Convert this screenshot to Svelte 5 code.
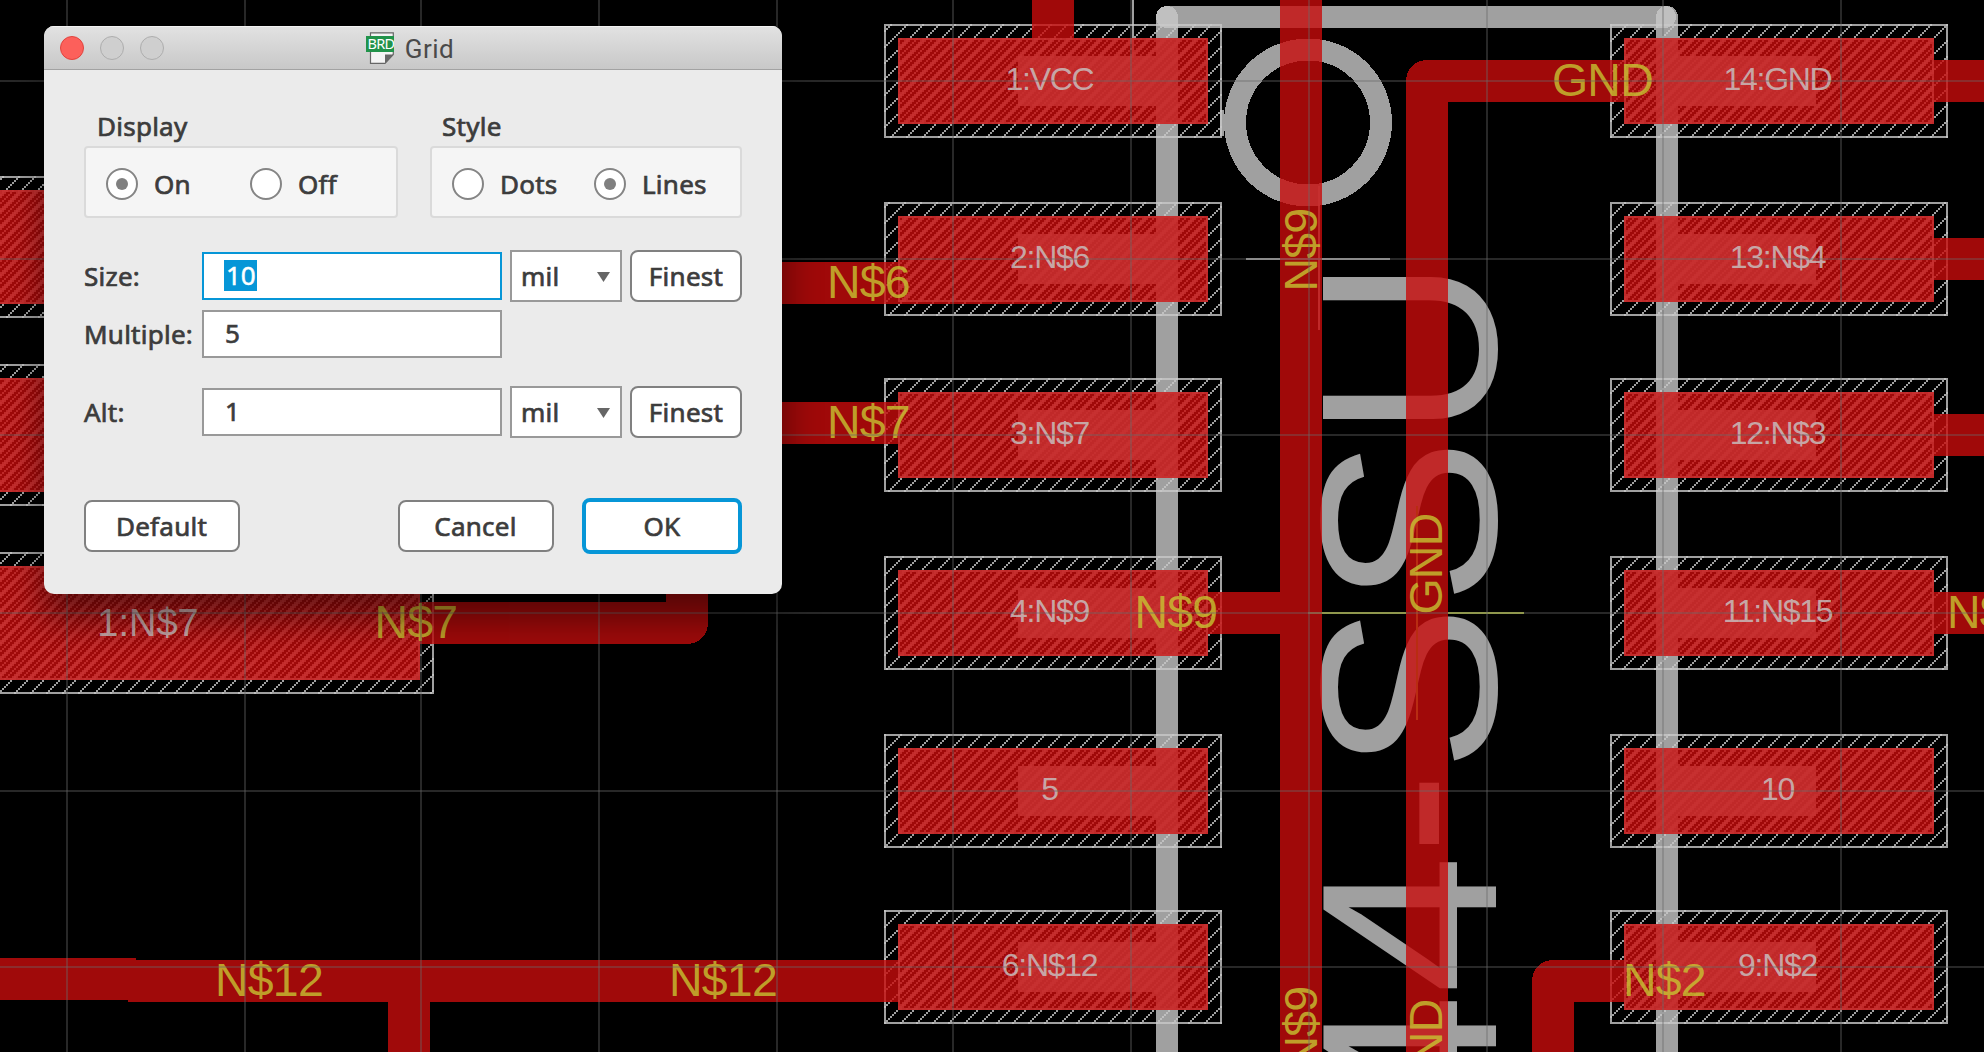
<script>
  const gridX = [66, 244, 420, 598, 776, 952, 1130, 1308, 1486, 1662, 1840];
  const gridY = [80, 258, 434, 612, 790, 966];
  const rows = [24, 202, 378, 556, 734, 910];
  const leftNames = ['1:VCC', '2:N$6', '3:N$7', '4:N$9', '5', '6:N$12'];
  const rightNames = ['14:GND', '13:N$4', '12:N$3', '11:N$15', '10', '9:N$2'];

  const pads = [
    ...rows.map((y, i) => ({ x: 884, y, w: 338, h: 114, name: leftNames[i], tx: 1049.5, box: 1018 })),
    ...rows.map((y, i) => ({ x: 1610, y, w: 338, h: 114, name: rightNames[i], tx: 1777.5, box: 1678 })),
    { x: -60, y: 176, w: 494, h: 142 },
    { x: -60, y: 364, w: 494, h: 142 },
    { x: -60, y: 552, w: 494, h: 142 }
  ];

  // Diagonal hatches are built from 2px cells in an 8 x 8 tile.
  const cells = (keep) => {
    const out = [];
    for (let i = 0; i < 8; i++)
      for (let j = 0; j < 8; j++) if (keep.includes((i + j) % 8)) out.push([i * 2, j * 2]);
    return out;
  };
  const wide = cells([1]);
  const dense = cells([0, 1, 2, 5]);

  const traces = [
    'M1032 0H1074V60H1032Z',
    'M700 262H1052V304H700Z',
    'M700 402H1000V444H700Z',
    'M300 602H666V560H708V623A21 21 0 0 1 687 644H300Z',
    'M0 958H136V960H920V1002H430V1052H388V1002H128V1000H0Z',
    'M1280 0H1322V1052H1280V634H1180V592H1280Z',
    'M1448 1052H1406V81A21 21 0 0 1 1427 60H1640V102H1448Z',
    'M1920 60H1984V102H1920Z',
    'M1920 238H1984V280H1920Z',
    'M1920 414H1984V456H1920Z',
    'M1920 592H1984V634H1920Z',
    'M1532 1052V981A21 21 0 0 1 1553 960H1640V1002H1574V1052Z'
  ];

  const nets = [
    ['N$6', 827, 298], ['N$7', 827, 438], ['N$7', 374.5, 638], ['N$12', 215, 996],
    ['N$12', 669, 996], ['N$9', 1134.5, 628], ['GND', 1552, 96], ['N$2', 1623, 996], ['N$15', 1947, 628]
  ];
  const upright = [
    ['N$9', 1317, 291.5], ['N$9', 1317, 1069.5], ['GND', 1442, 614.5], ['GND', 1442, 1100.5]
  ];

  let display = $state('On');
  let lineStyle = $state('Lines');
</script>

<main class="stage">
  <svg class="board" width="1984" height="1052" viewBox="0 0 1984 1052">
    <defs>
      <pattern id="wide" width="16" height="16" patternUnits="userSpaceOnUse">
        {#each wide as [x, y]}<rect {x} {y} width="2" height="2" class="layer" />{/each}
      </pattern>
      <pattern id="dense" width="16" height="16" patternUnits="userSpaceOnUse">
        {#each dense as [x, y]}<rect {x} {y} width="2" height="2" class="layer" />{/each}
      </pattern>
    </defs>

    <!-- silkscreen -->
    <g class="silk">
      <path d="M1167 1060V17M1667 1060V17" />
      <path d="M1167 17H1665" />
      <circle cx="1308" cy="122.5" r="73" />
      <rect x="1220" y="110" width="4" height="26" class="layer" />
      <rect x="1132" y="0" width="2" height="56" class="layer" />
      <rect x="1246" y="258" width="144" height="2" class="layer" />
      <rect x="1318" y="186" width="2" height="144" class="layer" />
      {#each pads as p}
        {#if p.name}<rect x={p.box} y={p.y + 32} width="138" height="50" class="layer" />{/if}
      {/each}
    </g>
    <text class="value" transform="translate(1496 1133) rotate(-90)">44-SSU</text>

    <!-- stop mask and pad hatching -->
    {#each pads as p}
      <rect x={p.x} y={p.y} width={p.w} height={p.h} fill="url(#wide)" />
      <rect x={p.x + 1} y={p.y + 1} width={p.w - 2} height={p.h - 2} class="outline" />
      <rect x={p.x + 14} y={p.y + 14} width={p.w - 28} height={p.h - 28} fill="url(#dense)" />
      <rect x={p.x + 15} y={p.y + 15} width={p.w - 30} height={p.h - 30} class="outline" />
    {/each}

    <!-- copper -->
    <g class="copper">
      {#each traces as d}<path {d} />{/each}
      {#each pads as p}
        <rect x={p.x + 14} y={p.y + 14} width={p.w - 28} height={p.h - 28} />
      {/each}
    </g>

    <rect x="1322" y="612" width="202" height="2" fill="#a6b43c" />
    <rect x="1406" y="612" width="42" height="2" fill="#a00a0a" />
    <rect x="1308" y="612" width="14" height="2" fill="#a8502c" />
    <rect x="1416" y="506" width="2" height="214" fill="#b92c12" />

    {#each pads as p}
      {#if p.name}<text class="pad" x={p.tx} y={p.y + 66}>{p.name}</text>{/if}
    {/each}
    <text class="pad big" x="148" y="636">1:N$7</text>
    {#each nets as [t, x, y]}<text class="net" {x} {y}>{t}</text>{/each}
    {#each upright as [t, x, y]}
      <text class="net" transform="translate({x} {y}) rotate(-90)">{t}</text>
    {/each}

    <g class="grid">
      {#each gridX as x}<rect {x} y="0" width="2" height="1052" />{/each}
      {#each gridY as y}<rect x="0" {y} width="1984" height="2" />{/each}
    </g>
  </svg>

  <section class="dialog">
    <header>
      <div class="lights"><i class="close"></i><i></i><i></i></div>
      <div class="title">
        <svg width="28" height="32" viewBox="0 0 28 32">
          <path d="M4.5 .8H27.3V22.5L19 31.3H4.5Z" fill="#f4f4f4" stroke="#666" stroke-width="1.2" />
          <path d="M19 31.3V22.6H27.3Z" fill="#666" />
          <rect y="4" width="28" height="16" fill="#21934a" />
          <text x="1.5" y="17.2" class="brd">BRD</text>
        </svg>
        <span>Grid</span>
      </div>
    </header>

    <div class="body">
      <div class="groups">
        <div class="group display">
          <h2>Display</h2>
          <div class="options">
            {#each ['On', 'Off'] as o}
              <button class="radio" onclick={() => (display = o)}>
                <i class:checked={display === o}></i>{o}
              </button>
            {/each}
          </div>
        </div>
        <div class="group look">
          <h2>Style</h2>
          <div class="options">
            {#each ['Dots', 'Lines'] as o}
              <button class="radio" onclick={() => (lineStyle = o)}>
                <i class:checked={lineStyle === o}></i>{o}
              </button>
            {/each}
          </div>
        </div>
      </div>

      <div class="row">
        <span class="label">Size:</span>
        <div class="field focused"><mark>10</mark></div>
        <div class="select">mil<svg width="13" height="10"><path d="M0 0H13L6.5 10Z" fill="#666" /></svg></div>
        <button class="push">Finest</button>
      </div>
      <div class="row multiple">
        <span class="label">Multiple:</span>
        <div class="field">5</div>
      </div>
      <div class="row alt">
        <span class="label">Alt:</span>
        <div class="field">1</div>
        <div class="select">mil<svg width="13" height="10"><path d="M0 0H13L6.5 10Z" fill="#666" /></svg></div>
        <button class="push">Finest</button>
      </div>

      <footer>
        <button class="push action">Default</button>
        <button class="push action cancel">Cancel</button>
        <button class="push ok">OK</button>
      </footer>
    </div>
  </section>
</main>

<style>
  :global(body) { margin: 0; background: #000; }
  * { box-sizing: border-box; }
  .stage {
    position: relative;
    width: 1984px;
    height: 1052px;
    overflow: hidden;
    background: #000;
    font-family: "Noto Sans", "Open Sans", sans-serif;
  }
  .board { display: block; shape-rendering: crispEdges; font-family: "Liberation Sans", Arial, sans-serif; }
  .layer { fill: rgba(200, 200, 200, 0.8); stroke: none; }
  .silk path, .silk circle { fill: none; stroke: rgba(200, 200, 200, 0.8); stroke-width: 22; stroke-linecap: round; }
  .value { font-size: 250px; fill: rgba(200, 200, 200, 0.8); }
  .outline { fill: none; stroke: rgba(200, 200, 200, 0.8); stroke-width: 2; }
  .copper { fill: rgb(200, 12, 12); opacity: 0.8; }
  .pad { font-size: 32px; letter-spacing: -1.3px; text-anchor: middle; fill: rgba(200, 200, 200, 0.8); }
  .pad.big { font-size: 38px; letter-spacing: 0; }
  .net { font-size: 46.5px; letter-spacing: -0.8px; fill: rgba(200, 200, 50, 0.8); }
  .grid { fill: rgba(105, 105, 105, 0.38); }

  .dialog {
    position: absolute;
    left: 44px;
    top: 26px;
    width: 738px;
    height: 568px;
    border-radius: 10px;
    overflow: hidden;
    background: #ebebeb;
    box-shadow: 0 24px 38px rgba(0, 0, 0, 0.48);
    color: #3c3c3c;
    font-size: 26px;
    line-height: 36px;
    letter-spacing: 0.25px;
    -webkit-text-stroke: 0.7px #3c3c3c;
  }
  header {
    display: grid;
    grid-template-columns: 1fr auto 1fr;
    align-items: center;
    height: 44px;
    padding-left: 16px;
    background: linear-gradient(#e2e2e2, #c8c8c8);
    border-bottom: 1px solid #a2a2a2;
    box-shadow: inset 0 1px #f2f2f2;
  }
  .lights { display: flex; gap: 16px; }
  .lights i { width: 24px; height: 24px; border-radius: 50%; border: 1px solid #adadad; background: #cfcfcf; }
  .lights i.close { background: #fc605b; border-color: #e0443e; }
  .title { display: flex; align-items: center; gap: 11px; margin-right: 22px; font: 26px/32px Roboto, sans-serif; letter-spacing: 0.5px; color: #4a4a4a; -webkit-text-stroke: 0; }
  .title span { padding-top: 2px; }
  .brd { font: 14.5px "Noto Sans", sans-serif; letter-spacing: -0.7px; fill: #fff; -webkit-text-stroke: 0.2px #fff; }
  .body { padding: 36px 40px 0; }
  .groups { display: flex; justify-content: space-between; height: 146px; }
  .group { display: flex; flex-direction: column; padding-top: 2px; }
  h2 { margin: 0; padding-left: 13px; height: 38px; font-size: 26px; font-weight: 400; line-height: 36px; }
  .display { width: 314px; }
  .look { width: 312px; }
  .look h2 { padding-left: 12px; }
  .options {
    display: flex;
    align-items: center;
    height: 72px;
    padding: 4px 0 0 20px;
    border: 2px solid #dadada;
    border-radius: 4px;
    background: #f5f5f5;
  }
  button { font: inherit; letter-spacing: inherit; color: inherit; padding: 0; -webkit-text-stroke: inherit; }
  .radio { display: flex; align-items: center; gap: 16px; width: 144px; border: 0; background: none; text-align: left; }
  .look .radio { width: 142px; }
  .radio i {
    display: grid;
    place-items: center;
    flex: none;
    width: 32px;
    height: 32px;
    border: 2px solid #858585;
    border-radius: 50%;
    background: #fff;
  }
  .radio i.checked::before { content: ""; width: 12px; height: 12px; border-radius: 50%; background: #808080; }
  .row { display: flex; align-items: center; height: 52px; margin-top: -2px; }
  .row.multiple { margin-top: 6px; }
  .row.alt { margin-top: 26px; }
  .label { width: 118px; }
  .field {
    display: flex;
    align-items: center;
    width: 300px;
    height: 48px;
    padding: 0 0 2px 21px;
    border: 2px solid #999;
    background: #fff;
  }
  .focused { padding-left: 20px; border-color: #0696d7; }
  mark { height: 31px; padding: 0 1px 0 2px; line-height: 31px; background: #0696d7; color: #fff; -webkit-text-stroke: 0.5px #fff; letter-spacing: 0; }
  .select {
    display: flex;
    align-items: center;
    justify-content: space-between;
    width: 112px;
    height: 52px;
    margin: 0 8px;
    padding: 0 10px 0 9px;
    border: 2px solid #999;
    background: #fff;
  }
  .select svg { margin-top: 2px; }
  .push { width: 112px; height: 52px; border: 2px solid #808080; border-radius: 8px; background: #fff; }
  footer { display: flex; align-items: center; height: 56px; margin-top: 60px; }
  .action { width: 156px; padding-right: 1px; }
  .cancel { margin: 0 28px 0 158px; }
  .ok { width: 160px; height: 56px; border: 4px solid #0696d7; }
</style>
